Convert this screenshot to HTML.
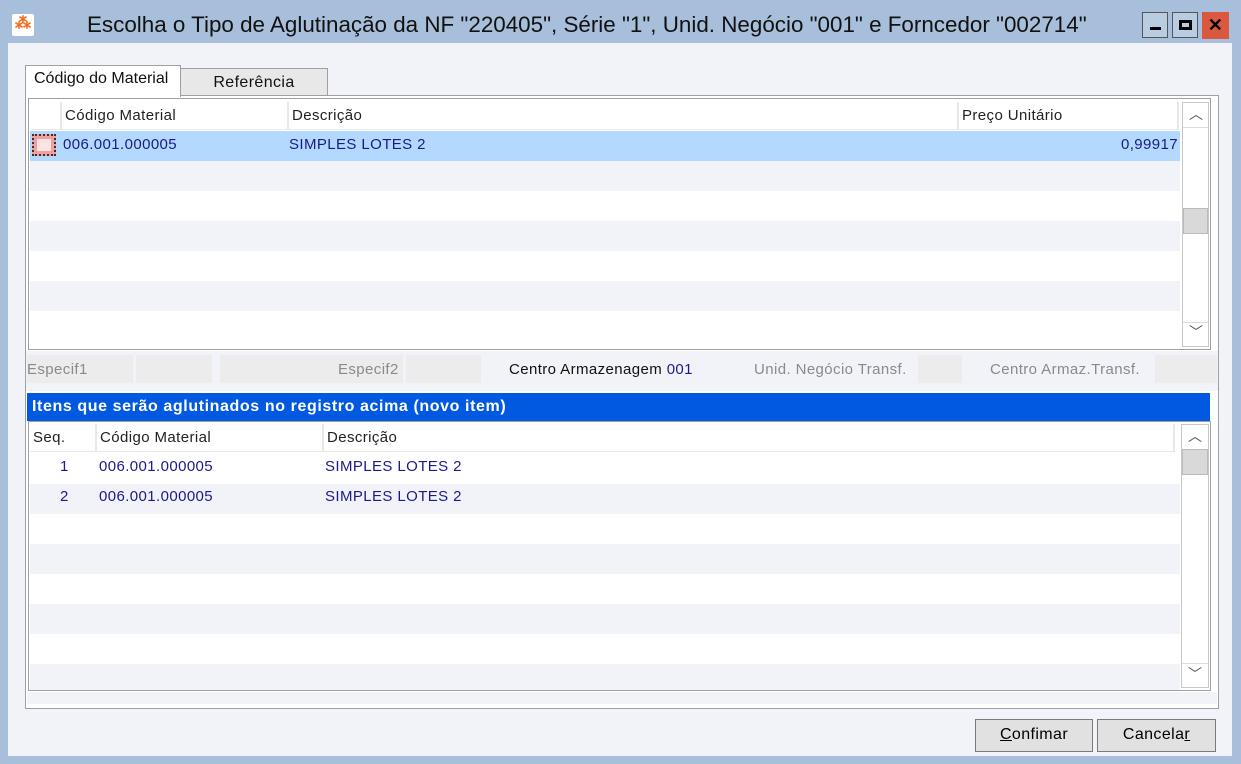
<!DOCTYPE html>
<html><head><meta charset="utf-8"><style>
*{box-sizing:border-box;margin:0;padding:0}
body{width:1241px;height:764px;background:#a7bfda;font-family:"Liberation Sans",sans-serif;font-size:15px;letter-spacing:0.4px;position:relative;overflow:hidden;color:#000}
.a{position:absolute}
.t{white-space:nowrap}
.blue{color:#1a1a8c}
.gray{color:#8a8a8a}
.hdr{background:#fff;border-right:2px solid #e8e8e8;border-bottom:1px solid #e8e8e8;height:28px;line-height:28px;padding-left:3px;color:#222}
.sb{background:#fff;border:1px solid #c8c8c8}
.btn{background:#e1e1e1;border:1px solid #7a7a7a;text-align:center;line-height:30px;font-size:16px}
</style></head><body>
<div class="a" style="left:12px;top:14px;width:22px;height:22px;background:#fff;border-radius:2px"></div>
<div class="a t" style="left:15px;top:13px;color:#f26a1b;font-weight:bold;font-size:16px">⁂</div>
<div class="a t" style="left:87px;top:12px;font-size:22.4px;letter-spacing:0;color:#111">Escolha o Tipo de Aglutinação da NF "220405", Série "1", Unid. Negócio "001" e Forncedor "002714"</div>
<div class="a" style="left:1142px;top:12px;width:26px;height:26px;border:1px solid #555;background:#b8cce2"><div class="a" style="left:7px;top:14px;width:11px;height:3px;background:#000"></div></div>
<div class="a" style="left:1172px;top:12px;width:26px;height:26px;border:1px solid #555;background:#b8cce2"><div class="a" style="left:6px;top:7px;width:13px;height:10px;border:3px solid #000"></div></div>
<div class="a" style="left:1202px;top:12px;width:27px;height:27px;background:#d9583e;color:#000;font-weight:bold;font-size:18px;text-align:center;line-height:26px">✕</div>
<div class="a" style="left:8px;top:43px;width:1224px;height:713px;background:#f2f3f8"></div>
<div class="a" style="left:180px;top:68px;width:148px;height:28px;background:#e8e8e8;border:1px solid #a0a0a0;text-align:center;line-height:28px;font-size:16px;color:#111">Referência</div>
<div class="a" style="left:25px;top:95px;width:1194px;height:614px;border:1px solid #a0a0a4;background:#fff"></div>
<div class="a" style="left:28px;top:98px;width:1183px;height:252px;border:1px solid #a0a0a4;background:#fff"></div>
<div class="a t" style="left:25px;top:65px;width:156px;height:32px;background:#fff;border:1px solid #a0a0a4;border-bottom:none;padding:4px 0 0 8px;font-size:16px;letter-spacing:0;color:#111">Código do Material</div>
<div class="a" style="left:30px;top:100px;width:1150px;height:248px">
 <div class="a hdr" style="left:1px;top:2px;width:31px"></div>
 <div class="a hdr t" style="left:32px;top:2px;width:227px">Código Material</div>
 <div class="a hdr t" style="left:259px;top:2px;width:670px">Descrição</div>
 <div class="a hdr t" style="left:929px;top:2px;width:220px">Preço Unitário</div>
 <div class="a" style="left:0;top:31px;width:1150px;height:30px;background:#b3d9ff"></div>
 <div class="a" style="left:2px;top:34px;width:24px;height:22px;background:#f0a0a0;border:2px dotted #333"><div class="a" style="left:3px;top:3px;width:14px;height:12px;background:#fbe3e3"></div></div>
 <div class="a t blue" style="left:33px;top:36px">006.001.000005</div>
 <div class="a t blue" style="left:259px;top:36px">SIMPLES LOTES 2</div>
 <div class="a t blue" style="left:1060px;top:36px;width:88px;text-align:right">0,99917</div>
 <div class="a" style="left:0;top:61px;width:1150px;height:30px;background:#f2f3f8"></div>
 <div class="a" style="left:0;top:121px;width:1150px;height:30px;background:#f2f3f8"></div>
 <div class="a" style="left:0;top:181px;width:1150px;height:30px;background:#f2f3f8"></div>
</div>
<div class="a sb" style="left:1182px;top:102px;width:27px;height:245px"></div>
<div class="a" style="left:1183px;top:208px;width:25px;height:26px;background:#d9d9d9;border:1px solid #bbb"></div>
<div class="a" style="left:1183px;top:127px;width:25px;height:1px;background:#ddd"></div>
<div class="a" style="left:1183px;top:322px;width:25px;height:1px;background:#ddd"></div>
<div class="a t" style="left:1189px;top:104px;color:#555;font-size:14px">︿</div>
<div class="a t" style="left:1189px;top:322px;color:#555;font-size:14px">﹀</div>
<div class="a" style="left:26px;top:351px;width:1192px;height:40px;background:#f2f3f8"></div>
<div class="a" style="left:27px;top:355px;width:106px;height:28px;background:#ececec"></div>
<div class="a" style="left:136px;top:355px;width:76px;height:28px;background:#ececec"></div>
<div class="a" style="left:220px;top:355px;width:183px;height:28px;background:#ececec"></div>
<div class="a" style="left:406px;top:355px;width:75px;height:28px;background:#ececec"></div>
<div class="a" style="left:918px;top:355px;width:44px;height:28px;background:#ececec"></div>
<div class="a" style="left:1155px;top:355px;width:62px;height:28px;background:#ececec"></div>
<div class="a t gray" style="left:27px;top:361px">Especif1</div>
<div class="a t gray" style="left:338px;top:361px">Especif2</div>
<div class="a t" style="left:509px;top:361px;color:#111">Centro Armazenagem <span class="blue">001</span></div>
<div class="a t gray" style="left:754px;top:361px">Unid. Negócio Transf.</div>
<div class="a t gray" style="left:990px;top:361px">Centro Armaz.Transf.</div>
<div class="a t" style="left:27px;top:393px;width:1183px;height:28px;background:#0059e0;color:#fff;font-weight:bold;font-size:16px;letter-spacing:0.6px;line-height:28px;padding-left:5px">Itens que serão aglutinados no registro acima (novo item)</div>
<div class="a" style="left:28px;top:421px;width:1183px;height:270px;border:1px solid #a0a0a4;background:#fff"></div>
<div class="a" style="left:30px;top:422px;width:1150px;height:268px">
 <div class="a hdr t" style="left:0;top:2px;width:67px">Seq.</div>
 <div class="a hdr t" style="left:67px;top:2px;width:227px">Código Material</div>
 <div class="a hdr t" style="left:294px;top:2px;width:851px">Descrição</div>
 <div class="a" style="left:0;top:62px;width:1150px;height:30px;background:#f2f3f8"></div>
 <div class="a" style="left:0;top:122px;width:1150px;height:30px;background:#f2f3f8"></div>
 <div class="a" style="left:0;top:182px;width:1150px;height:30px;background:#f2f3f8"></div>
 <div class="a" style="left:0;top:242px;width:1150px;height:26px;background:#f2f3f8"></div>
 <div class="a t blue" style="left:30px;top:36px">1</div>
 <div class="a t blue" style="left:69px;top:36px">006.001.000005</div>
 <div class="a t blue" style="left:295px;top:36px">SIMPLES LOTES 2</div>
 <div class="a t blue" style="left:30px;top:66px">2</div>
 <div class="a t blue" style="left:69px;top:66px">006.001.000005</div>
 <div class="a t blue" style="left:295px;top:66px">SIMPLES LOTES 2</div>
</div>
<div class="a sb" style="left:1181px;top:424px;width:28px;height:264px"></div>
<div class="a" style="left:1182px;top:449px;width:26px;height:26px;background:#d9d9d9;border:1px solid #bbb"></div>
<div class="a" style="left:1182px;top:663px;width:26px;height:1px;background:#ddd"></div>
<div class="a t" style="left:1188px;top:426px;color:#555;font-size:14px">︿</div>
<div class="a t" style="left:1188px;top:664px;color:#555;font-size:14px">﹀</div>
<div class="a" style="left:27px;top:692px;width:1190px;height:12px;background:#f2f3f8"></div>
<div class="a btn" style="left:975px;top:719px;width:118px;height:33px"><u>C</u>onfimar</div>
<div class="a btn" style="left:1097px;top:719px;width:119px;height:33px">Cancela<u>r</u></div>
</body></html>
